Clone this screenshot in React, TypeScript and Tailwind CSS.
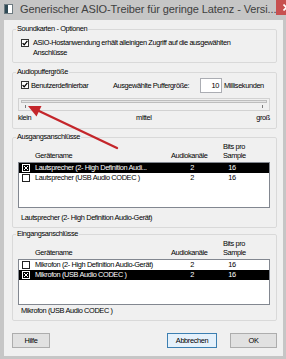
import React from "react";

function AppIcon() {
  return (
    <svg width="9" height="10" viewBox="0 0 9 10">
      <rect x="0.5" y="0.5" width="8" height="9" fill="#ffffff" stroke="#6d7a80" />
      <rect x="1" y="1" width="3" height="8" fill="#2f4a55" />
    </svg>
  );
}

function Check() {
  return (
    <svg width="8" height="8" viewBox="0 0 8 8" className="shrink-0">
      <rect x="0.5" y="0.5" width="7" height="7" fill="#ffffff" stroke="#333333" />
      <path d="M1.6 4.1 L3.2 5.8 L6.4 1.9" fill="none" stroke="#000000" strokeWidth="1.3" />
    </svg>
  );
}

function RowBox({ checked }: { checked: boolean }) {
  const c = checked ? "#ffffff" : "#222222";
  return (
    <svg width="8" height="8" viewBox="0 0 8 8" className="shrink-0">
      <rect x="0.5" y="0.5" width="7" height="7" fill="none" stroke={c} />
      {checked && <path d="M2 2 L6 6 M6 2 L2 6" stroke={c} strokeWidth="1" />}
    </svg>
  );
}

type Row = { name: string; ch: string; bits: string; selected: boolean };

function DeviceGroup({
  title,
  rows,
  status,
  statusGap,
  height,
  mt,
}: {
  title: string;
  rows: Row[];
  status: string;
  statusGap: string;
  height: string;
  mt: string;
}) {
  return (
    <fieldset className={`${height} ${mt} border border-[#d9d9d9] rounded-[2px] pl-[5px] shrink-0`}>
      <legend className="-ml-[2px] px-[1px] leading-[10px]">{title}</legend>
      <div className="flex w-[252px] leading-[9px]">
        <div className="w-[153px] pl-[17px] flex flex-col justify-end">Gerätename</div>
        <div className="w-[42px] flex flex-col justify-end">Audiokanäle</div>
        <div className="ml-[10px] flex flex-col">
          <span>Bits pro</span>
          <span>Sample</span>
        </div>
      </div>
      <div className="mt-[2px] w-[252px] h-[46px] bg-white border border-[#828790] flex flex-col">
        {rows.map((r) => (
          <div
            key={r.name}
            className={`h-[10px] flex items-center leading-[10px] ${r.selected ? "bg-black text-white" : ""}`}
          >
            <div className="w-[152px] flex items-center pl-[3px] gap-[5px] whitespace-nowrap">
              <RowBox checked={r.selected} />
              <span>{r.name}</span>
            </div>
            <div className="w-[42px] text-center">{r.ch}</div>
            <div className="w-[38px] text-center">{r.bits}</div>
          </div>
        ))}
      </div>
      <div className={`${statusGap} ml-[3px] leading-[10px]`}>{status}</div>
    </fieldset>
  );
}

export default function App() {
  return (
    <div className="w-[286px] h-[359px] bg-[#c6c6c6] flex flex-col overflow-hidden relative font-['Liberation_Sans',Arial,sans-serif] text-[7.4px] tracking-[-0.38px] text-black">
      <div className="h-[20px] flex items-start shrink-0">
        <div className="pl-[4px] pt-[4px]">
          <AppIcon />
        </div>
        <div className="ml-[7px] mt-[2px] text-[11px] tracking-[-0.1px] leading-[14px] text-[#404040] whitespace-nowrap">
          Generischer ASIO-Treiber für geringe Latenz - Versi...
        </div>
        <div className="ml-auto w-[20px] h-[15px] bg-[#c75050] flex items-center justify-center shrink-0">
          <svg width="7" height="7" viewBox="0 0 7 7">
            <path d="M0.5 0.5 L6.5 6.5 M6.5 0.5 L0.5 6.5" stroke="#ffffff" strokeWidth="1.6" />
          </svg>
        </div>
      </div>

      <div className="ml-[4px] mr-[3px] mb-[3px] flex-1 bg-[#f0f0f0] flex flex-col pl-[8px] pr-[6px]">
        <fieldset className="h-[39px] mt-[4px] border border-[#d9d9d9] rounded-[2px] pl-[5px] shrink-0">
          <legend className="-ml-[2px] px-[1px] leading-[10px]">Soundkarten - Optionen</legend>
          <div className="mt-[4px] ml-[3px] flex items-start gap-[4px]">
            <div className="mt-[1px]">
              <Check />
            </div>
            <div className="leading-[10px] whitespace-nowrap">
              ASIO-Hostanwendung erhält alleinigen Zugriff auf die ausgewählten
              <br />
              Anschlüsse
            </div>
          </div>
        </fieldset>

        <fieldset className="h-[62px] mt-[4px] border border-[#d9d9d9] rounded-[2px] pl-[5px] shrink-0">
          <legend className="-ml-[2px] px-[1px] leading-[10px]">Audiopuffergröße</legend>
          <div className="mt-[1px] h-[15px] flex items-center whitespace-nowrap">
            <div className="w-[95px] pl-[3px] flex items-center gap-[2px]">
              <Check />
              <span>Benutzerdefinierbar</span>
            </div>
            <div className="w-[87px]">Ausgewählte Puffergröße:</div>
            <div className="w-[22px] h-[15px] bg-white border border-[#abadb3] text-right pr-[2px] leading-[13px]">10</div>
            <div className="ml-[2px]">Millisekunden</div>
          </div>
          <div className="mt-[5px] w-[252px] h-[13px] border border-[#d2d2d2] px-[2px] pt-[1px] flex flex-col">
            <div className="h-[3px] border border-[#bdbdbd] bg-[#e4e4e4]"></div>
            <div className="flex justify-between px-[4px] mt-[2px]">
              <div className="w-[1px] h-[3px] bg-[#7a7a7a]"></div>
              <div className="w-[1px] h-[3px] bg-[#7a7a7a]"></div>
            </div>
          </div>
          <div className="mt-[2px] w-[252px] flex justify-between leading-[10px]">
            <span>klein</span>
            <span>mittel</span>
            <span>groß</span>
          </div>
        </fieldset>

        <DeviceGroup
          title="Ausgangsanschlüsse"
          mt="mt-[3px]"
          height="h-[96px]"
          statusGap="mt-[5px]"
          status="Lautsprecher (2- High Definition Audio-Gerät)"
          rows={[
            { name: "Lautsprecher (2- High Definition Audi...", ch: "2", bits: "16", selected: true },
            { name: "Lautsprecher (USB Audio CODEC )", ch: "2", bits: "16", selected: false },
          ]}
        />

        <DeviceGroup
          title="Eingangsanschlüsse"
          mt="mt-[1px]"
          height="h-[92px]"
          statusGap="mt-[1px]"
          status="Mikrofon (USB Audio CODEC )"
          rows={[
            { name: "Mikrofon (2- High Definition Audio-Gerät)", ch: "2", bits: "16", selected: false },
            { name: "Mikrofon (USB Audio CODEC )", ch: "2", bits: "16", selected: true },
          ]}
        />

        <div className="mt-[12px] flex items-start">
          <button className="w-[38px] h-[15px] bg-[#e1e1e1] border border-[#adadad] leading-[13px]">Hilfe</button>
          <button className="ml-auto w-[50px] h-[15px] bg-[#e5f1fb] border border-[#3c7fb1] leading-[13px]">Abbrechen</button>
          <button className="ml-[13px] w-[47px] h-[15px] bg-[#e1e1e1] border border-[#adadad] leading-[13px]">OK</button>
        </div>
      </div>

      <svg className="absolute left-0 top-0 pointer-events-none" width="286" height="359" viewBox="0 0 286 359">
        <path d="M117 148 L39 111" stroke="#c4262b" strokeWidth="2.4" strokeLinecap="round" />
        <path d="M28 106 L41.5 106 L36.5 116.5 Z" fill="#c4262b" />
      </svg>
    </div>
  );
}
